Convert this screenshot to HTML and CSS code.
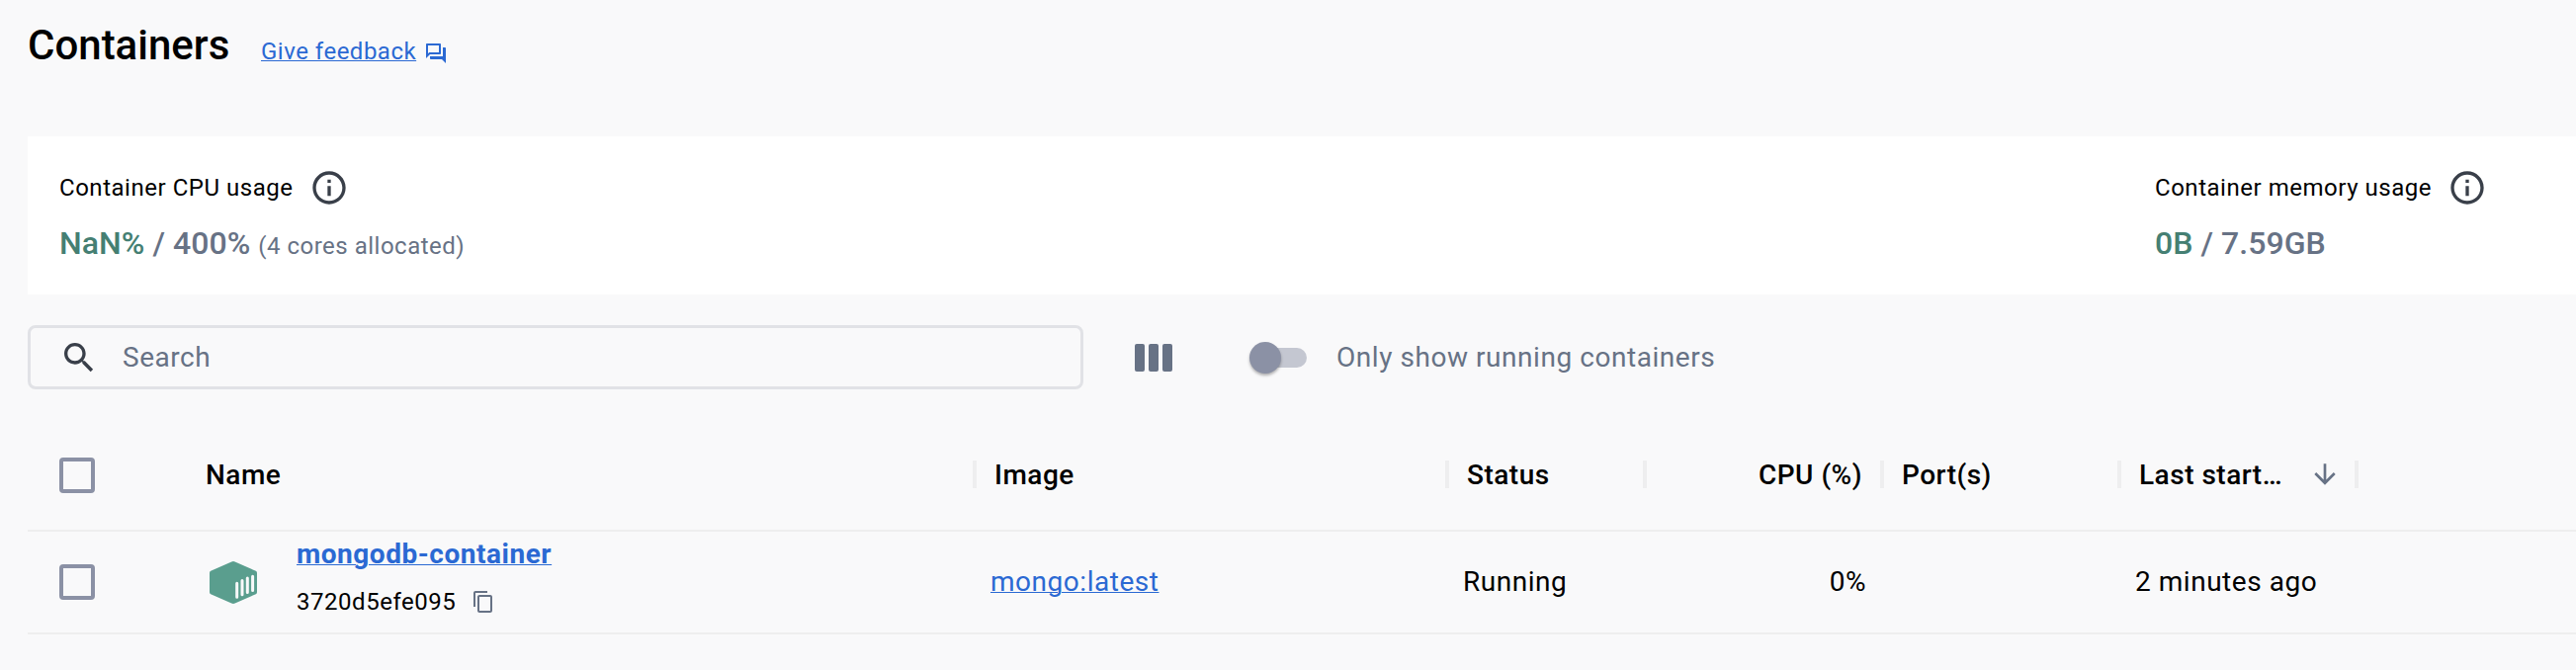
FILE: index.html
```html
<!DOCTYPE html>
<html lang="en">
<head>
<meta charset="utf-8">
<title>Containers</title>
<link rel="stylesheet" href="styles.css">
</head>
<body>
<header class="header">
  <h1 class="title">Containers</h1>
  <a class="link feedback" href="#">Give feedback</a>
  <svg class="feedback-icon" viewBox="0 0 24 24"><path d="M15 4v7H5.17L4 12.17V4h11m1-2H3c-.55 0-1 .45-1 1v14l4-4h10c.55 0 1-.45 1-1V3c0-.55-.45-1-1-1zm5 4h-2v9H6v2c0 .55.45 1 1 1h11l4 4V7c0-.55-.45-1-1-1z"/></svg>
</header>

<section class="usage">
  <div class="stat stat-cpu">
    <div class="stat-head"><span class="stat-label">Container CPU usage</span>
      <svg class="info" viewBox="0 0 24 24"><path d="M11 7h2v2h-2zm0 4h2v6h-2zm1-9C6.48 2 2 6.48 2 12s4.48 10 10 10 10-4.480 10-10S17.520 2 12 2zm0 18c-4.410 0-8-3.590-8-8s3.590-8 8-8 8 3.590 8 8-3.590 8-8 8z"/></svg></div>
    <div class="stat-value"><span class="used">NaN%</span> / 400% <span class="note">(4 cores allocated)</span></div>
  </div>
  <div class="stat">
    <div class="stat-head"><span class="stat-label">Container memory usage</span>
      <svg class="info" viewBox="0 0 24 24"><path d="M11 7h2v2h-2zm0 4h2v6h-2zm1-9C6.48 2 2 6.48 2 12s4.48 10 10 10 10-4.480 10-10S17.520 2 12 2zm0 18c-4.410 0-8-3.590-8-8s3.590-8 8-8 8 3.590 8 8-3.590 8-8 8z"/></svg></div>
    <div class="stat-value"><span class="used">0B</span> / 7.59GB</div>
  </div>
</section>

<div class="toolbar">
  <div class="search">
    <svg class="search-icon" viewBox="0 0 24 24"><path d="M15.500 14h-.790l-.280-.270C15.410 12.590 16 11.110 16 9.500 16 5.910 13.090 3 9.500 3S3 5.910 3 9.500 5.910 16 9.500 16c1.610 0 3.090-.590 4.230-1.570l.270.280v.790l5 4.990L20.490 19l-4.990-5zm-6 0C7.010 14 5 11.990 5 9.500S7.010 5 9.500 5 14 7.010 14 9.500 11.990 14 9.500 14z"/></svg>
    <span class="search-text">Search</span>
  </div>
  <div class="columns"><i></i><i></i><i></i></div>
  <div class="switch"><span class="thumb"></span></div>
  <span class="switch-label">Only show running containers</span>
</div>

<div class="table">
  <div class="row head">
    <div class="cell"><span class="checkbox"></span></div>
    <div class="cell h-name">Name</div>
    <div class="cell h">Image</div>
    <div class="cell h">Status</div>
    <div class="cell h h-cpu">CPU (%)</div>
    <div class="cell h">Port(s)</div>
    <div class="cell h"><span>Last start…</span>
      <svg class="arrow" viewBox="0 0 24 24"><path d="M20 12l-1.410-1.410L13 16.170V4h-2v12.170l-5.580-5.590L4 12l8 8 8-8z"/></svg></div>
    <div class="cell h"></div>
  </div>
  <div class="row body">
    <div class="cell"><span class="checkbox"></span></div>
    <div class="cell c-name">
      <svg class="box" viewBox="0 0 48 43"><path fill="#5a9e8e" d="M22.300.5q1.700-.8 3.400 0L46.800 9.800q1.200.6 1.200 1.900v19.600q0 1.300-1.200 1.900L25.700 42.500q-1.700.8-3.400 0L1.200 33.200Q0 32.600 0 31.300V11.700Q0 10.400 1.200 9.800z"/><g stroke="#f9f9fa" stroke-width="3" stroke-linecap="round"><path d="M27.700 22.200v14M33 19.400v14.300M38.300 17v14.600M43.600 15.200v14.200"/></g></svg>
      <div class="ident">
        <a class="link name" href="#">mongodb-container</a>
        <div class="id-line"><span class="id">3720d5efe095</span>
          <svg class="copy" viewBox="0 0 24 24"><path d="M16 1H4c-1.100 0-2 .9-2 2v14h2V3h12V1zm3 4H8c-1.100 0-2 .9-2 2v14c0 1.100.9 2 2 2h11c1.100 0 2-.9 2-2V7c0-1.100-.9-2-2-2zm0 16H8V7h11v14z"/></svg></div>
      </div>
    </div>
    <div class="cell c"><a class="link" href="#">mongo:latest</a></div>
    <div class="cell c">Running</div>
    <div class="cell c c-cpu">0%</div>
    <div class="cell c"></div>
    <div class="cell c">2 minutes ago</div>
    <div class="cell c"></div>
  </div>
</div>
</body>
</html>
```
FILE: styles.css
```css
* { box-sizing: border-box; }
body {
  margin: 0;
  height: 678px;
  padding-left: 28px;
  overflow: hidden;
  background: #f9f9fa;
  color: #000;
  font-family: Roboto, sans-serif;
  font-size: 28px;
  letter-spacing: 0.53px;
}
svg { display: block; flex: none; fill: currentColor; }
.link { color: #2b69d3; text-decoration: underline; text-decoration-thickness: 1px; text-underline-offset: 1px; }

.header { display: flex; align-items: baseline; height: 138px; padding-top: 22px; }
.title { margin: 0; width: 236px; font-size: 42px; line-height: 48px; font-weight: 500; letter-spacing: 0; }
.feedback { width: 158px; font-size: 24px; letter-spacing: .5px; white-space: nowrap; }
.feedback-icon { width: 24px; height: 24px; margin-left: 7px; color: #2b69d3; align-self: flex-start; margin-top: 20px; }

.usage { display: flex; height: 160px; padding: 32px 0 0 32px; background: #fff; }
.stat-cpu { width: 2120px; }
.stat-head { display: flex; align-items: center; height: 40px; gap: 16px; font-size: 24px; }
.info { width: 40px; height: 40px; color: #393f49; }
.stat-value { margin-top: 16px; line-height: 40px; font-size: 32px; font-weight: 500; color: #677285; letter-spacing: .05px; }
.used { color: #457f73; }
.note { font-size: 24px; font-weight: 400; letter-spacing: .5px; }

.toolbar { display: flex; align-items: center; height: 66px; margin-top: 31px; color: #677285; }
.search { display: flex; align-items: center; align-self: flex-start; width: 1068px; height: 65px; padding-left: 29px; gap: 24px; border: 3px solid #e1e2e6; border-radius: 8px; }
.search-icon { width: 40px; height: 40px; color: #393f49; }
.search-text { padding-bottom: 1px; }
.columns { display: flex; gap: 4px; margin-left: 52px; }
.columns i { width: 10px; height: 28px; border-radius: 2px; background: #677285; }
.switch { width: 58px; height: 20px; margin-left: 78px; border-radius: 10px; background: linear-gradient(90deg, transparent 10px, #c4c7d1 10px); }
.thumb { display: block; width: 32px; height: 32px; margin-top: -6px; border-radius: 50%; background: #8b91a5; box-shadow: 0 2px 3px rgba(0,0,0,.3); }
.switch-label { margin-left: 30px; padding-bottom: 2px; letter-spacing: .55px; }

.table { margin-top: 29px; }
.row { display: grid; grid-template-columns: 181px 777px 478px 200px 240px 240px 240px 1fr; border-bottom: 2px solid #eeeeee; }
.head { height: 114px; font-weight: 500; letter-spacing: .5px; }
.body { height: 104px; }
.cell { display: flex; align-items: center; white-space: nowrap; }
.checkbox { width: 36px; height: 36px; margin-left: 32px; border: 4px solid #8b91a5; border-radius: 4px; }
.head .checkbox { margin-top: 2px; }
.h-name { margin-left: -1px; }
.h::before { content: ""; width: 4px; height: 28px; margin: 0 18px 0 -2px; background: #eeeeef; }
.h-cpu::before { margin-right: auto; }
.h-cpu { padding-right: 20px; }
.arrow { width: 32px; height: 32px; margin-left: auto; margin-right: 16px; color: #677285; }
.c { padding-left: 16px; padding-bottom: 2px; }
.c-cpu { justify-content: flex-end; padding-right: 16px; }
.c-name { padding-left: 3px; }
.box { width: 48px; height: 43px; }
.ident { margin: -8px 0 0 40px; }
.name { display: block; font-weight: 700; line-height: 48px; }
.id-line { display: flex; align-items: center; height: 48px; font-size: 24px; gap: 16px; }
.copy { width: 24px; height: 24px; color: #677285; }
```
